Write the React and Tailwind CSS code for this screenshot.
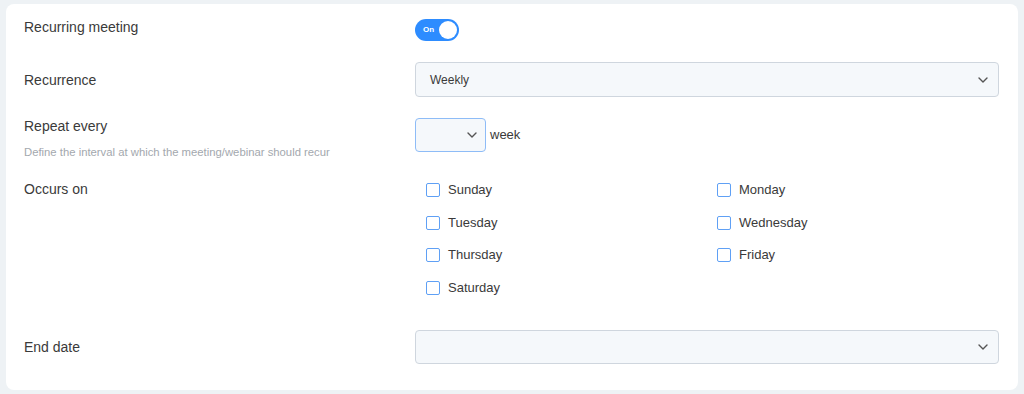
import React from 'react';

const days = ['Sunday', 'Monday', 'Tuesday', 'Wednesday', 'Thursday', 'Friday', 'Saturday'];

function Chevron() {
  return (
    <svg width="10" height="6" viewBox="0 0 10 6" fill="none" className="shrink-0">
      <path d="M1 1l4 4 4-4" stroke="#555" strokeWidth="1.4" strokeLinecap="round" strokeLinejoin="round" />
    </svg>
  );
}

function Select({ value, className = '' }) {
  return (
    <div className={`flex items-center justify-between rounded-[4px] border border-[#cfd6de] bg-[#f5f8fb] pl-[14px] pr-[10px] text-[12px] text-[#3a3a3a] ${className}`}>
      <span>{value}</span>
      <Chevron />
    </div>
  );
}

export default function App() {
  return (
    <div className="min-h-[394px] bg-[#eef2f5] px-[6px] pt-[4px] pb-[5px]" style={{ fontFamily: '"Liberation Sans", Arial, sans-serif' }}>
      <div className="flex flex-col rounded-lg bg-white pl-[18px] pr-[19px] pt-[13px] pb-[26px] text-[#3a3a3a]">
        {/* Recurring meeting */}
        <div className="flex items-start">
          <div className="w-[391px] text-[14px] leading-5">Recurring meeting</div>
          <div className="mt-[2px] flex h-[22px] w-[44px] items-center justify-between rounded-full bg-[#2d8cff] pl-[8px] pr-[2px]">
            <span className="text-[8px] font-bold text-white">On</span>
            <span className="h-[18px] w-[18px] rounded-full bg-white"></span>
          </div>
        </div>

        {/* Recurrence */}
        <div className="mt-[21px] flex items-center">
          <div className="w-[391px] text-[14px] leading-5">Recurrence</div>
          <Select value="Weekly" className="h-[35px] flex-1" />
        </div>

        {/* Repeat every */}
        <div className="mt-[19px] flex items-start">
          <div className="w-[391px]">
            <div className="text-[14px] leading-5">Repeat every</div>
            <div className="mt-[8px] text-[11.3px] leading-4 text-[#a3a8ae]">Define the interval at which the meeting/webinar should recur</div>
          </div>
          <div className="mt-[2px] flex items-center gap-[4px]">
            <div className="flex h-[34px] w-[71px] items-center justify-end rounded-[4px] border border-[#8ebcf7] bg-[#f5f8fb] pr-[8px]">
              <Chevron />
            </div>
            <span className="text-[13px]">week</span>
          </div>
        </div>

        {/* Occurs on */}
        <div className="mt-[19px] flex items-start">
          <div className="w-[391px] text-[14px] leading-5">Occurs on</div>
          <div className="grid grid-cols-[291px_1fr] gap-y-[12.5px] pl-[11px] pt-[1px]">
            {days.map((d) => (
              <label key={d} className="flex h-5 items-center gap-[8px] text-[13px]">
                <span className="h-[14px] w-[14px] rounded-[2px] border border-[#5fa0f5] bg-white"></span>
                {d}
              </label>
            ))}
          </div>
        </div>

        {/* End date */}
        <div className="mt-[32px] flex items-center">
          <div className="w-[391px] text-[14px] leading-5">End date</div>
          <Select value="" className="h-[34px] flex-1" />
        </div>
      </div>
    </div>
  );
}
